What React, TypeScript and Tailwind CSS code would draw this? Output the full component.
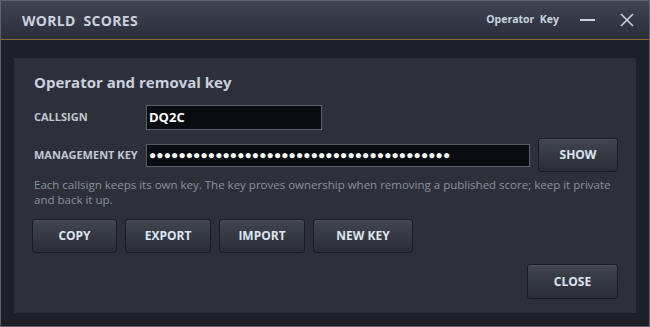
import React from "react";

const font = { fontFamily: '"Open Sans", "Noto Sans", sans-serif' };

function Btn({ label, w, h = "h-[34px]" }: { label: string; w: string; h?: string }) {
  return (
    <button
      className={`${w} ${h} rounded-[3px] border border-[#1a1c22] bg-gradient-to-b from-[#41454f] to-[#2a2d35] text-[12px] font-bold text-[#dce6f0] shadow-[inset_0_1px_0_#4c505a]`}
    >
      {label}
    </button>
  );
}

export default function App() {
  return (
    <div className="w-[650px] h-[327px] border border-[#5c6272] bg-[#1e2029] flex flex-col" style={font}>
      <div className="h-[39px] bg-gradient-to-b from-[#3f4453] to-[#2b2f39] border-b border-[#8a6a2c] flex items-center pl-[21px] pr-[15px]">
        <span className="text-[14px] font-bold text-[#c9d2de] tracking-[0.3px]">WORLD&nbsp; SCORES</span>
        <span className="ml-auto text-[10.5px] font-bold text-[#c9d2de]">Operator&nbsp; Key</span>
        <span className="ml-[21px] w-[15px] h-[2px] bg-[#c9d2de]" />
        <svg className="ml-[25px]" width="14" height="14" viewBox="0 0 14 14">
          <path d="M1 1 L13 13 M13 1 L1 13" stroke="#c9d2de" strokeWidth="1.6" />
        </svg>
      </div>
      <div className="flex-1 pt-[18px] pl-[13px] pr-[13px] pb-[13px]">
        <div className="h-full bg-[#2e3039] pl-[20px] pr-[18px] pt-[13px] flex flex-col">
          <h1 className="text-[15px] font-bold text-[#c9d2de] leading-[22px]">Operator and removal key</h1>
          <div className="flex items-center mt-[12px]">
            <span className="w-[112px] text-[11px] font-bold text-[#c0c8d4]">CALLSIGN</span>
            <div className="w-[176px] h-[25px] bg-[#090c11] border border-[#5a5e66] flex items-center pl-[2px] text-[13px] font-bold text-white">
              DQ2C
            </div>
          </div>
          <div className="flex items-center mt-[8px]">
            <span className="w-[112px] text-[11px] font-bold text-[#c0c8d4]">MANAGEMENT KEY</span>
            <div className="w-[384px] h-[23px] bg-[#090c11] border border-[#5a5e66] flex items-center pl-[2px] text-[13px] font-bold text-white overflow-hidden">
              <span className="tracking-[0.1px] text-[12px]">{"●".repeat(41)}</span>
            </div>
            <div className="ml-[8px]">
              <Btn label="SHOW" w="w-[80px]" />
            </div>
          </div>
          <p className="mt-[5px] text-[11.5px] leading-[15px] text-[#8a919d]">
            Each callsign keeps its own key. The key proves ownership when removing a published score; keep it private and back it up.
          </p>
          <div className="flex gap-[8px] mt-[12px] -ml-[2px]">
            <Btn label="COPY" w="w-[85px]" />
            <Btn label="EXPORT" w="w-[86px]" />
            <Btn label="IMPORT" w="w-[86px]" />
            <Btn label="NEW KEY" w="w-[100px]" />
          </div>
          <div className="flex justify-end mt-[11px]">
            <Btn label="CLOSE" w="w-[91px]" h="h-[35px]" />
          </div>
        </div>
      </div>
    </div>
  );
}
